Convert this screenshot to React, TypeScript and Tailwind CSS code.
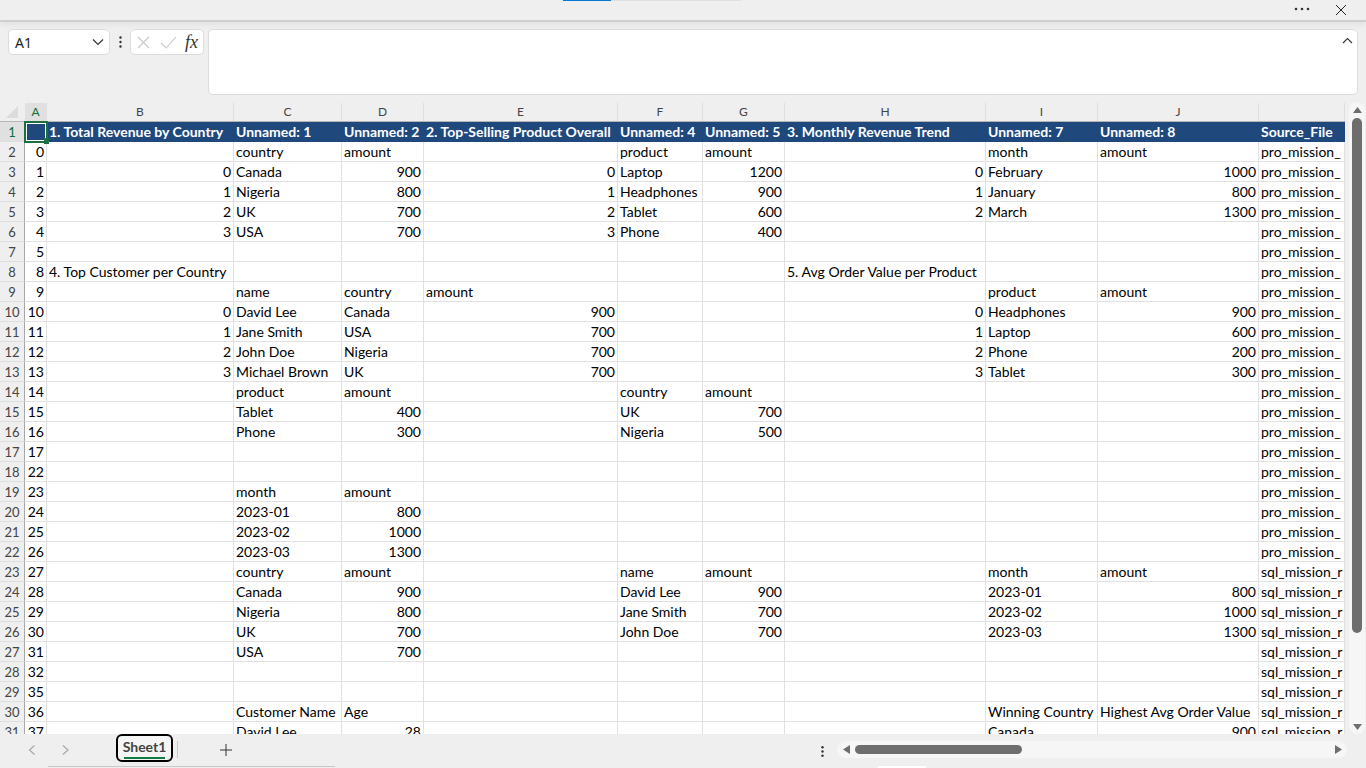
import React from "react";

const widths = [22, 187, 108, 82, 194, 85, 82, 201, 112, 161, 86];
const letters = ["A", "B", "C", "D", "E", "F", "G", "H", "I", "J", ""];
const P = "pro_mission_";
const S = "sql_mission_r";
type C = string | number | null;
const _ = null;
const rows: C[][] = [
  ["", "1. Total Revenue by Country", "Unnamed: 1", "Unnamed: 2", "2. Top-Selling Product Overall", "Unnamed: 4", "Unnamed: 5", "3. Monthly Revenue Trend", "Unnamed: 7", "Unnamed: 8", "Source_File"],
  [0, _, "country", "amount", _, "product", "amount", _, "month", "amount", P],
  [1, 0, "Canada", 900, 0, "Laptop", 1200, 0, "February", 1000, P],
  [2, 1, "Nigeria", 800, 1, "Headphones", 900, 1, "January", 800, P],
  [3, 2, "UK", 700, 2, "Tablet", 600, 2, "March", 1300, P],
  [4, 3, "USA", 700, 3, "Phone", 400, _, _, _, P],
  [5, _, _, _, _, _, _, _, _, _, P],
  [8, "4. Top Customer per Country", _, _, _, _, _, "5. Avg Order Value per Product", _, _, P],
  [9, _, "name", "country", "amount", _, _, _, "product", "amount", P],
  [10, 0, "David Lee", "Canada", 900, _, _, 0, "Headphones", 900, P],
  [11, 1, "Jane Smith", "USA", 700, _, _, 1, "Laptop", 600, P],
  [12, 2, "John Doe", "Nigeria", 700, _, _, 2, "Phone", 200, P],
  [13, 3, "Michael Brown", "UK", 700, _, _, 3, "Tablet", 300, P],
  [14, _, "product", "amount", _, "country", "amount", _, _, _, P],
  [15, _, "Tablet", 400, _, "UK", 700, _, _, _, P],
  [16, _, "Phone", 300, _, "Nigeria", 500, _, _, _, P],
  [17, _, _, _, _, _, _, _, _, _, P],
  [22, _, _, _, _, _, _, _, _, _, P],
  [23, _, "month", "amount", _, _, _, _, _, _, P],
  [24, _, "2023-01", 800, _, _, _, _, _, _, P],
  [25, _, "2023-02", 1000, _, _, _, _, _, _, P],
  [26, _, "2023-03", 1300, _, _, _, _, _, _, P],
  [27, _, "country", "amount", _, "name", "amount", _, "month", "amount", S],
  [28, _, "Canada", 900, _, "David Lee", 900, _, "2023-01", 800, S],
  [29, _, "Nigeria", 800, _, "Jane Smith", 700, _, "2023-02", 1000, S],
  [30, _, "UK", 700, _, "John Doe", 700, _, "2023-03", 1300, S],
  [31, _, "USA", 700, _, _, _, _, _, _, S],
  [32, _, _, _, _, _, _, _, _, _, S],
  [35, _, _, _, _, _, _, _, _, _, S],
  [36, _, "Customer Name", "Age", _, _, _, _, "Winning Country", "Highest Avg Order Value", S],
  [37, _, "David Lee", 28, _, _, _, _, "Canada", 900, S],
];

export default function App() {
  return (
    <div className="w-[1366px] h-[768px] overflow-hidden flex flex-col bg-[#efefef] text-black font-['Lato','Liberation_Sans',sans-serif]">
      {/* title strip */}
      <div className="h-[22px] shrink-0 flex items-start border-b-2 border-[#cfcfcf] relative z-10 bg-[#efefef] shadow-[0_3px_5px_rgba(0,0,0,0.05)]">
        <div className="ml-[563px] w-[48px] h-px bg-[#0078d4]" />
        <div className="w-[130px] h-px bg-[#e0e0e0]" />
        <svg className="ml-auto mr-[56px] mt-[7px]" width="16" height="4" viewBox="0 0 16 4"><circle cx="2" cy="2" r="1.3" fill="#333" /><circle cx="8" cy="2" r="1.3" fill="#333" /><circle cx="14" cy="2" r="1.3" fill="#333" /></svg>
        <svg className="absolute left-[1335px] top-[4px]" width="12" height="12" viewBox="0 0 12 12"><path d="M1 1L11 11M11 1L1 11" stroke="#222" strokeWidth="1" /></svg>
      </div>
      {/* formula bar */}
      <div className="h-[81px] shrink-0 flex items-start pt-[7px] pl-[8px] pr-[8px]">
        <div className="w-[102px] h-[26px] bg-white rounded-[5px] border border-[#dcdcdc] flex items-center justify-between pl-[6px] pr-[5px] text-[14px] text-[#222] font-['Noto_Sans',sans-serif]">
          <span>A1</span>
          <svg width="12" height="8" viewBox="0 0 12 8"><path d="M1 1.5L6 6.5L11 1.5" fill="none" stroke="#333" strokeWidth="1.2" /></svg>
        </div>
        <div className="w-[20px] h-[26px] flex justify-center items-center">
          <svg width="3" height="12" viewBox="0 0 3 12"><circle cx="1.5" cy="1.5" r="1.2" fill="#333" /><circle cx="1.5" cy="6" r="1.2" fill="#333" /><circle cx="1.5" cy="10.5" r="1.2" fill="#333" /></svg>
        </div>
        <div className="w-[74px] h-[26px] bg-white rounded-[5px] border border-[#dcdcdc] flex items-center pl-[6px] relative">
          <svg width="13" height="13" viewBox="0 0 13 13"><path d="M1 1L12 12M12 1L1 12" stroke="#c8c8c8" strokeWidth="1.1" /></svg>
          <svg className="ml-[10px]" width="17" height="13" viewBox="0 0 17 13"><path d="M1 7L6 12L16 1" fill="none" stroke="#c8c8c8" strokeWidth="1.1" /></svg>
          <span className="ml-[8px] font-['Liberation_Serif',serif] italic text-[18px] text-[#333] leading-none">fx</span>
        </div>
        <div className="ml-[4px] w-[1150px] h-[66px] bg-white rounded-[5px] border border-[#dcdcdc] flex justify-end pt-[7px] pr-[4px]">
          <svg width="11" height="7" viewBox="0 0 11 7"><path d="M1 6L5.5 1.5L10 6" fill="none" stroke="#333" strokeWidth="1.1" /></svg>
        </div>
      </div>
      {/* sheet + vertical scroll */}
      <div className="h-[631px] shrink-0 flex">
        <div className="w-[1345px] h-[631px] shrink-0 overflow-hidden relative">
          <div className="flex h-[19px] text-[12px] text-[#444] border-b border-[#b5b5b5]">
            <div className="w-[25px] shrink-0 flex items-center justify-center">
              <svg width="12" height="12" viewBox="0 0 12 12" className="ml-[-1px]"><path d="M12 0V12H0Z" fill="#dcdcdc" /></svg>
            </div>
            {widths.map((w, i) => (
              <div key={i} style={{ width: w }} className={`shrink-0 flex items-center justify-center border-r border-[#dedede] ${i === 0 ? "bg-[#e0e0e0] text-[#0f6b3a]" : ""}`}>
                {letters[i]}
              </div>
            ))}
          </div>
          {rows.map((r, ri) => (
            <div key={ri} className="flex h-[20px] text-[14px] leading-[20px]">
              <div className={`w-[25px] shrink-0 text-center text-[13px] border-b border-[#dedede] border-r border-r-[#a8a8a8] ${ri === 0 ? "bg-[#e0e0e0] text-[#0f6b3a]" : "text-[#444]"}`}>
                {ri + 1}
              </div>
              {r.map((c, ci) => (
                <div
                  key={ci}
                  style={{ width: widths[ci] }}
                  className={`shrink-0 overflow-hidden whitespace-nowrap px-[2px] ${
                    ri === 0 ? "bg-[#1f497d] text-white font-bold" : "bg-white border-b border-r border-[#e1e1e1]"
                  } ${typeof c === "number" ? "text-right" : "text-left"}`}
                >
                  {c}
                </div>
              ))}
            </div>
          ))}
          {/* selected cell A1 */}
          <div className="absolute left-[24px] top-[18px] w-[24px] h-[22px] border-2 border-[#1d6f42] shadow-[inset_0_0_0_1px_#ffffff]">
            <div className="absolute left-[18px] top-[15px] w-[5px] h-[6px] bg-[#1d6f42]" />
          </div>
        </div>
        <div className="w-[21px] shrink-0 flex flex-col items-center pl-[3px]">
          <div className="w-[16px] h-[634px] -mt-px rounded-[8px] bg-[#f6f6f6] flex flex-col items-center pt-[5px]">
            <svg width="9" height="6" viewBox="0 0 9 6"><path d="M4.5 0L9 6H0Z" fill="#6e6e6e" /></svg>
            <div className="w-[10px] h-[515px] mt-[5px] rounded-[5px] bg-[#6e6e6e]" />
            <svg className="mt-auto mb-[4px]" width="9" height="6" viewBox="0 0 9 6"><path d="M4.5 6L9 0H0Z" fill="#6e6e6e" /></svg>
          </div>
        </div>
      </div>
      {/* tabs */}
      <div className="h-[32px] shrink-0 flex items-start">
        <svg className="ml-[28px] mt-[11px]" width="8" height="10" viewBox="0 0 8 10"><path d="M6.5 0.5L1.5 5L6.5 9.5" fill="none" stroke="#a8a8a8" strokeWidth="1.2" /></svg>
        <svg className="ml-[26px] mt-[11px]" width="8" height="10" viewBox="0 0 8 10"><path d="M1 0.5L6 5L1 9.5" fill="none" stroke="#a8a8a8" strokeWidth="1.2" /></svg>
        <div className="ml-[46px] w-[57px] h-[28px] rounded-[6px] border-2 border-black bg-[#f5f5f5] flex flex-col items-center text-[14px] font-bold text-[#444] leading-[18px] pt-[2px]">
          <span>Sheet1</span>
          <div className="w-[41px] h-[2px] bg-[#107c41] mt-[1px]" />
        </div>
        <div className="ml-[4px] mt-[7px] w-px h-[17px] bg-[#c8c8c8]" />
        <svg className="ml-[42px] mt-[10px]" width="12" height="12" viewBox="0 0 12 12"><path d="M6 0V12M0 6H12" stroke="#333" strokeWidth="1" /></svg>
        <svg className="ml-[589px] mt-[12px]" width="3" height="11" viewBox="0 0 3 11"><circle cx="1.5" cy="1.2" r="1.2" fill="#333" /><circle cx="1.5" cy="5.5" r="1.2" fill="#333" /><circle cx="1.5" cy="9.8" r="1.2" fill="#333" /></svg>
        <div className="ml-[13px] mt-[7px] w-[510px] h-[17px] rounded-[9px] bg-[#f6f6f6] flex items-center pl-[6px] pr-[5px]">
          <svg width="7" height="9" viewBox="0 0 7 9"><path d="M0 4.5L7 0V9Z" fill="#6e6e6e" /></svg>
          <div className="ml-[5px] w-[167px] h-[9px] rounded-[5px] bg-[#6e6e6e]" />
          <svg className="ml-auto" width="7" height="9" viewBox="0 0 7 9"><path d="M7 4.5L0 0V9Z" fill="#6e6e6e" /></svg>
        </div>
      </div>
      {/* window edge */}
      <div className="h-[2px] shrink-0 flex">
        <div className="ml-[48px] w-[287px] h-px bg-[#c8c8c8]" />
        <div className="ml-[543px] w-[48px] h-[2px] bg-white" />
      </div>
    </div>
  );
}
